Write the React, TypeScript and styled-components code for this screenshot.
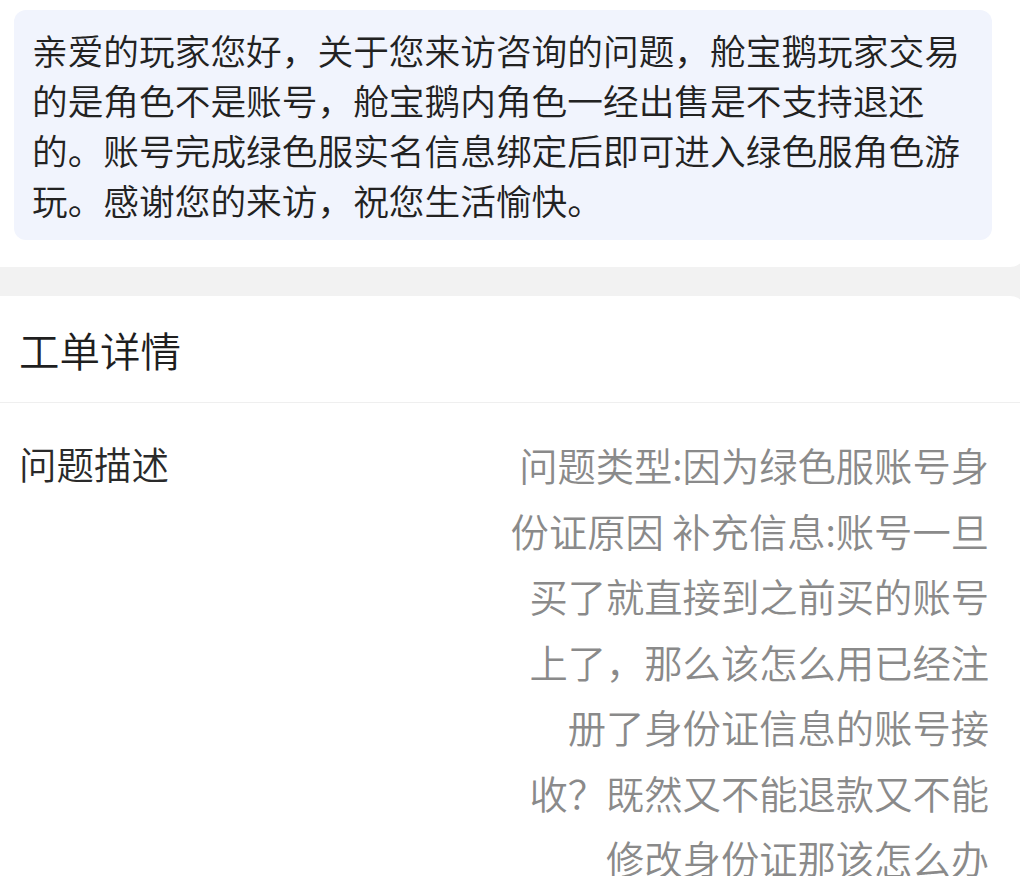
import React from "react";
import styled, { createGlobalStyle } from "styled-components";

const GlobalStyle = createGlobalStyle`
  html, body {
    margin: 0;
    padding: 0;
    background: #f2f2f2;
    overflow: hidden;
  }
  body {
    font-family: "Noto Sans CJK SC", "Noto Sans", sans-serif;
    font-weight: 350;
  }
`;

const Page = styled.div`
  display: flex;
  flex-direction: column;
  gap: 29px;
  width: 1020px;
  overflow: hidden;
`;

// cards run a bit past the left edge, only the right corners show
const Card = styled.section`
  background: #ffffff;
  margin: 0 -6px 0 -16px;
  border-radius: 16px;
`;

const ReplyCard = styled(Card)`
  padding: 10px 34px 27px 30px;
  border-top-left-radius: 0;
  border-top-right-radius: 0;
`;

const ReplyBubble = styled.div`
  background: #f1f4fd;
  border-radius: 12px;
  padding: 15px 18px;
  font-size: 35.7px;
  line-height: 50px;
  color: #222222;
`;

const DetailCard = styled(Card)`
  min-height: 600px;
`;

const DetailHeader = styled.header`
  display: flex;
  align-items: center;
  height: 106px;
  padding: 0 0 0 35px;
  font-size: 40.5px;
  color: #1f1f1f;
  border-bottom: 1px solid #efefef;
`;

const DetailRow = styled.div`
  display: flex;
  justify-content: space-between;
  align-items: flex-start;
  padding: 29px 37px 0 35px;
`;

const RowLabel = styled.div`
  font-size: 37.5px;
  line-height: 62px;
  color: #2a2a2a;
  flex-shrink: 0;
`;

const RowValue = styled.div`
  width: 490px;
  text-align: right;
  font-size: 38.3px;
  line-height: 65.5px;
  color: #8a8a8a;
`;

const reply =
  "亲爱的玩家您好，关于您来访咨询的问题，舱宝鹅玩家交易的是角色不是账号，舱宝鹅内角色一经出售是不支持退还的。账号完成绿色服实名信息绑定后即可进入绿色服角色游玩。感谢您的来访，祝您生活愉快。";

const description =
  "问题类型:因为绿色服账号身份证原因 补充信息:账号一旦买了就直接到之前买的账号上了，那么该怎么用已经注册了身份证信息的账号接收？既然又不能退款又不能修改身份证那该怎么办";

const App = () => {
  return (
    <>
      <GlobalStyle />
      <Page>
        <ReplyCard>
          <ReplyBubble>{reply}</ReplyBubble>
        </ReplyCard>
        <DetailCard>
          <DetailHeader>工单详情</DetailHeader>
          <DetailRow>
            <RowLabel>问题描述</RowLabel>
            <RowValue>{description}</RowValue>
          </DetailRow>
        </DetailCard>
      </Page>
    </>
  );
};

export default App;
